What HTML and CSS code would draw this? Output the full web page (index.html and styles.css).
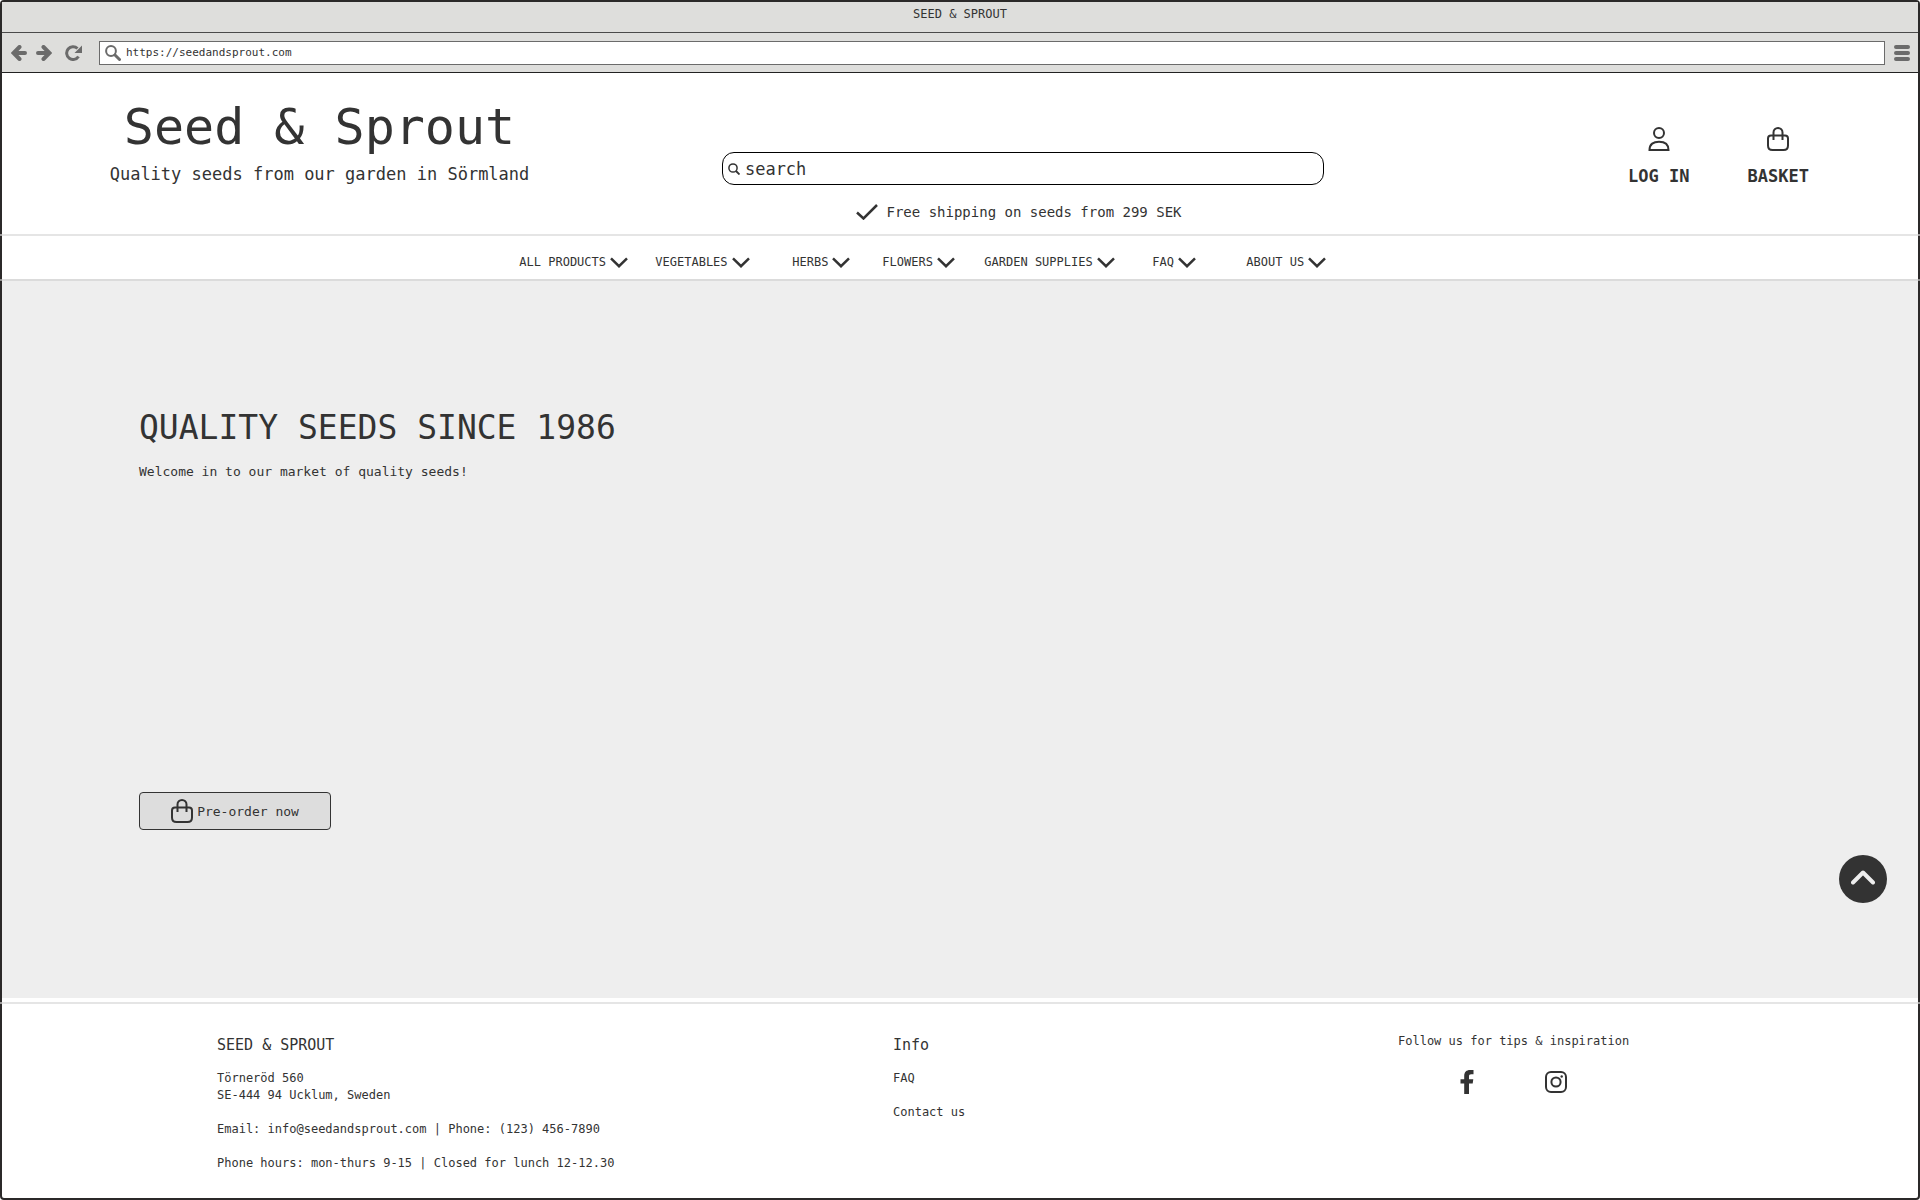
FILE: index.html
```html
<!DOCTYPE html>
<html lang="en">
<head>
<meta charset="utf-8">
<meta name="viewport" content="width=device-width, initial-scale=1">
<title>Seed &amp; Sprout</title>
<link rel="stylesheet" href="styles.css">
</head>
<body>
<svg class="sprite" aria-hidden="true">
  <symbol id="chevron" viewBox="0 0 18 11"><path d="M1 1.300L9 9.200 17 1.300" fill="none" stroke="currentColor" stroke-width="2.500"/></symbol>
  <symbol id="bag" viewBox="0 0 22 24"><path d="M4 8.500H18Q21 8.500 21 11.500V18.500Q21 23 16.500 23H5.500Q1 23 1 18.500V11.500Q1 8.500 4 8.500ZM6.500 13V5.500a4.500 4.500 0 0 1 9 0V13" fill="none" stroke="currentColor" stroke-width="2"/></symbol>
</svg>
<div class="window">
  <div class="titlebar">SEED &amp; SPROUT</div>
  <div class="toolbar">
    <button class="tool" type="button" aria-label="Back"><svg width="16" height="16" viewBox="0 0 16 16"><path d="M8.500 2L2.500 8l6 6M3 8h11" fill="none" stroke="currentColor" stroke-width="4" stroke-linecap="round"/></svg></button>
    <button class="tool" type="button" aria-label="Forward"><svg width="16" height="16" viewBox="0 0 16 16"><path d="M7.500 2l6 6-6 6M13 8H2" fill="none" stroke="currentColor" stroke-width="4" stroke-linecap="round"/></svg></button>
    <button class="tool reload" type="button" aria-label="Reload"><svg width="17" height="16" viewBox="0 0 17 16"><path d="M13.500 11.500A6.400 6.400 0 1 1 12.500 3.500" fill="none" stroke="currentColor" stroke-width="3"/><path d="M17 0.500V8H9.500Z" fill="currentColor"/></svg></button>
    <label class="address">
      <svg width="16" height="16" viewBox="0 0 16 16"><circle cx="6" cy="6" r="4.900" fill="none" stroke="currentColor" stroke-width="2"/><path d="M10 10l4.500 4.500" stroke="currentColor" stroke-width="3" stroke-linecap="round"/></svg>
      <input type="text" value="https://seedandsprout.com" aria-label="Address">
    </label>
    <button class="tool" type="button" aria-label="Menu"><svg width="16" height="16" viewBox="0 0 16 16"><path d="M2 2h12M2 8h12M2 14h12" stroke="currentColor" stroke-width="4" stroke-linecap="round"/></svg></button>
  </div>

  <header class="header">
    <div class="brand">
      <a class="brand-name" href="#">Seed &amp; Sprout</a>
      <p class="tagline">Quality seeds from our garden in Sörmland</p>
    </div>
    <div class="search-area">
      <label class="search">
        <svg width="12" height="12" viewBox="0 0 12 12"><circle cx="5" cy="5" r="4.100" fill="none" stroke="currentColor" stroke-width="1.500"/><path d="M8 8l3.500 3.500" stroke="currentColor" stroke-width="1.800"/></svg>
        <input type="search" placeholder="search" aria-label="Search">
      </label>
      <p class="shipping"><svg width="22" height="16" viewBox="0 0 22 16"><path d="M1 8.500L7.500 14.500 21 1" fill="none" stroke="currentColor" stroke-width="2.500"/></svg>Free shipping on seeds from 299 SEK</p>
    </div>
    <div class="account">
      <a href="#"><svg width="22" height="24" viewBox="0 0 22 24"><circle cx="11" cy="6" r="5" fill="none" stroke="currentColor" stroke-width="2"/><path d="M1.500 23C1.500 17 5.500 14.700 11 14.700S20.500 17 20.500 23Z" fill="none" stroke="currentColor" stroke-width="2"/></svg>LOG IN</a>
      <a href="#"><svg width="22" height="24"><use href="#bag"/></svg>BASKET</a>
    </div>
  </header>
  <div class="rule"></div>
  <nav class="nav">
    <a href="#">ALL PRODUCTS<svg width="18" height="11"><use href="#chevron"/></svg></a>
    <a href="#">VEGETABLES<svg width="18" height="11"><use href="#chevron"/></svg></a>
    <a href="#">HERBS<svg width="18" height="11"><use href="#chevron"/></svg></a>
    <a href="#">FLOWERS<svg width="18" height="11"><use href="#chevron"/></svg></a>
    <a href="#">GARDEN SUPPLIES<svg width="18" height="11"><use href="#chevron"/></svg></a>
    <a href="#">FAQ<svg width="18" height="11"><use href="#chevron"/></svg></a>
    <a href="#">ABOUT US<svg width="18" height="11"><use href="#chevron"/></svg></a>
  </nav>
  <div class="rule"></div>

  <main class="hero">
    <h1>QUALITY SEEDS SINCE 1986</h1>
    <p>Welcome in to our market of quality seeds!</p>
    <button class="preorder" type="button"><svg width="22" height="24"><use href="#bag"/></svg>Pre-order now</button>
    <a class="to-top" href="#" aria-label="Back to top"><svg width="24" height="15" viewBox="0 0 24 15"><path d="M2 12.500L12 2.500 22 12.500" fill="none" stroke="currentColor" stroke-width="4" stroke-linecap="round" stroke-linejoin="round"/></svg></a>
  </main>

  <div class="rule rule-footer"></div>
  <footer class="footer">
    <section class="column">
      <h2>SEED &amp; SPROUT</h2>
      <address>Törneröd 560<br>SE-444 94 Ucklum, Sweden</address>
      <p>Email: info@seedandsprout.com | Phone: (123) 456-7890</p>
      <p>Phone hours: mon-thurs 9-15 | Closed for lunch 12-12.30</p>
    </section>
    <section class="column">
      <h2>Info</h2>
      <a href="#">FAQ</a>
      <a href="#">Contact us</a>
    </section>
    <section class="follow">
      <p>Follow us for tips &amp; inspiration</p>
      <div class="social">
        <a href="#" aria-label="Facebook"><svg width="14" height="24" viewBox="0 0 14 24"><path d="M4.200 24V13.600H0.500V9.300H4.200V6C4.200 2 6.500 0 10 0H13.500V4.200H11.300C9.500 4.200 9 5 9 6.500V9.300H13.300L12.700 13.600H9V24Z" fill="currentColor"/></svg></a>
        <a href="#" aria-label="Instagram"><svg width="22" height="24" viewBox="0 0 22 24"><rect x="1" y="2" width="20" height="20" rx="5" fill="none" stroke="currentColor" stroke-width="2"/><circle cx="11" cy="12" r="4.600" fill="none" stroke="currentColor" stroke-width="2"/><circle cx="16.700" cy="6.500" r="1.200" fill="currentColor"/></svg></a>
      </div>
    </section>
  </footer>
</div>
</body>
</html>
```
FILE: styles.css
```css
*, *::before, *::after { box-sizing: border-box; }
body, h1, h2, p { margin: 0; }
body {
  font: 12px/17px "DejaVu Sans Mono", monospace;
  color: #333;
  background: #fff;
}
h1, h2 { font-weight: 400; }
a { color: inherit; text-decoration: none; }
svg { display: block; flex: none; }
button, input { font: inherit; color: inherit; }
input { border: 0; outline: 0; padding: 0; background: none; min-width: 0; flex: 1; }
.sprite { position: absolute; width: 0; height: 0; }

.window {
  display: flex;
  flex-direction: column;
  min-height: 100vh;
  border: 2px solid #2b2929;
  border-radius: 4px;
}

/* Browser chrome */
.titlebar {
  padding: 4px 0 9px;
  text-align: center;
  background: #dededc;
  border-bottom: 1px solid #4a4a4a;
}
.toolbar {
  display: flex;
  align-items: center;
  gap: 9px;
  height: 40px;
  padding: 0 8px 0 9px;
  background: #dededc;
  border-bottom: 1px solid #222;
}
.tool {
  padding: 0;
  border: 0;
  background: none;
  color: #6b6b6b;
}
.reload { margin: 0 8px 0 4px; }
.address {
  display: flex;
  align-items: center;
  gap: 5px;
  flex: 1;
  height: 24px;
  padding: 0 5px;
  font-size: 11px;
  background: #fff;
  border: 1px solid #6b6b6b;
}
.address svg { color: #6b6b6b; }

/* Shop header */
.header {
  display: grid;
  grid-template-columns: 635fr 772fr 509fr;
  padding-bottom: 10px;
}
.brand {
  display: flex;
  flex-direction: column;
  align-items: center;
  gap: 7px;
  padding-top: 26px;
}
.brand-name { font-size: 50px; line-height: 56px; }
.tagline { font-size: 17px; line-height: 24px; }
.search-area {
  display: flex;
  flex-direction: column;
  align-items: center;
  gap: 15px;
  padding-top: 79px;
}
.search {
  display: flex;
  align-items: center;
  gap: 5px;
  width: 78%;
  height: 33px;
  padding: 0 5px;
  font-size: 17px;
  border: 1px solid #000;
  border-radius: 12px;
}
.search input::placeholder { color: #333; opacity: 1; }
.shipping {
  display: flex;
  align-items: center;
  gap: 8px;
  padding-right: 8px;
  font-size: 14px;
  line-height: 24px;
}
.account {
  display: flex;
  justify-content: center;
  gap: 58px;
  padding: 54px 0 0 110px;
  font-size: 17px;
  line-height: 24px;
  font-weight: 700;
}
.account a {
  display: flex;
  flex-direction: column;
  align-items: center;
  gap: 13px;
}

/* The rules run across the window frame */
.rule {
  height: 2px;
  margin: 0 -2px;
  background: rgba(215, 215, 215, 0.65);
}
.nav + .rule { background: rgba(200, 200, 200, 0.65); }
.rule-footer { margin-top: 4px; }

.nav {
  display: grid;
  grid-template-columns: 136px 137px 90px 102px 168px 94px auto;
  justify-content: start;
  align-items: center;
  height: 43px;
  padding: 10px 0 0 27%;
}
.nav a {
  display: flex;
  align-items: center;
  gap: 4px;
}

/* Hero */
.hero {
  position: relative;
  flex: 1;
  display: flex;
  flex-direction: column;
  align-items: flex-start;
  padding: 127px 137px 168px;
  background: #eee;
}
.hero h1 { font-size: 33px; line-height: 40px; }
.hero p { margin-top: 14px; font-size: 13px; line-height: 20px; }
.preorder {
  display: flex;
  align-items: center;
  justify-content: center;
  gap: 4px;
  width: 192px;
  height: 38px;
  margin-top: 310px;
  padding: 0;
  font-size: 13px;
  background: #ddd;
  border: 1px solid #333;
  border-radius: 4px;
}
.to-top {
  position: absolute;
  right: 31px;
  bottom: 95px;
  display: grid;
  place-items: center;
  width: 48px;
  height: 48px;
  padding-bottom: 4px;
  color: #eee;
  background: #333;
  border-radius: 50%;
}

/* Footer */
.footer {
  display: grid;
  grid-template-columns: 676fr 505fr 520fr;
  padding: 29px 0 26px 215px;
}
.footer h2 { font-size: 15px; line-height: 24px; margin-bottom: -4px; }
.column {
  display: flex;
  flex-direction: column;
  align-items: flex-start;
  gap: 17px;
}
address { font-style: normal; }
.follow {
  display: flex;
  flex-direction: column;
  align-items: center;
  justify-self: start;
  gap: 20px;
}
.social { display: flex; gap: 71px; }
```
